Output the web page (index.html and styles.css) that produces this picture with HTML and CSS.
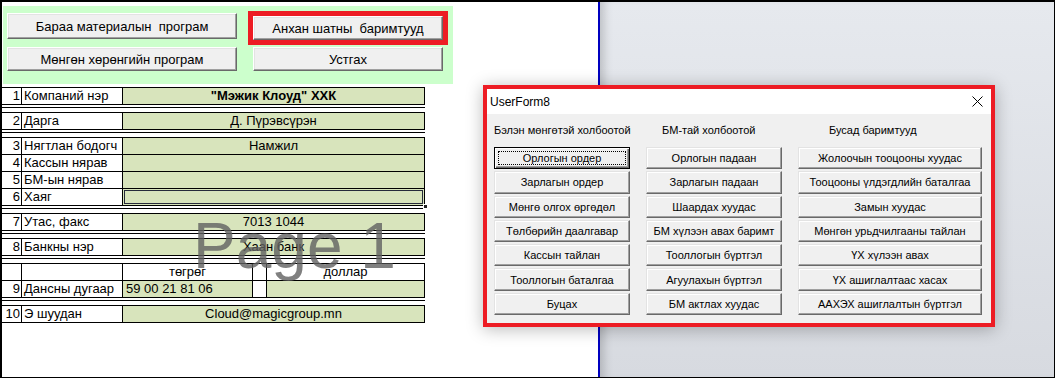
FILE: index.html
```html
<!DOCTYPE html>
<html lang="mn">
<head>
    <meta charset="UTF-8">
    <title>Анхан шатны баримтууд</title>
    <link rel="stylesheet" href="styles.css">
</head>
<body>
<div class="screen">
    <!-- Sheet -->
    <div class="sheet">
        <div class="panel">
            <button class="xbtn tall">Бараа материалын&nbsp; програм</button>
            <button class="xbtn marked">Анхан шатны&nbsp; баримтууд</button>
            <button class="xbtn">Мөнгөн хөрөнгийн програм</button>
            <button class="xbtn">Устгах</button>
        </div>

        <div class="info">
            <div class="grp">
                <div class="row"><span class="num">1</span><span class="label">Компаний нэр</span><span class="val bold">"Мэжик Клоуд" ХХК</span></div>
            </div>
            <div class="gap"></div>
            <div class="grp">
                <div class="row"><span class="num">2</span><span class="label">Дарга</span><span class="val">Д. Пүрэвсүрэн</span></div>
            </div>
            <div class="gap"></div>
            <div class="grp">
                <div class="row"><span class="num">3</span><span class="label">Нягтлан бодогч</span><span class="val">Намжил</span></div>
                <div class="row"><span class="num">4</span><span class="label">Кассын нярав</span><span class="val"></span></div>
                <div class="row"><span class="num">5</span><span class="label">БМ-ын нярав</span><span class="val"></span></div>
                <div class="row"><span class="num">6</span><span class="label">Хаяг</span><span class="val selected"><span class="handle"></span></span></div>
            </div>
            <div class="gap"></div>
            <div class="grp">
                <div class="row"><span class="num">7</span><span class="label">Утас, факс</span><span class="val">7013 1044</span></div>
            </div>
            <div class="gap"></div>
            <div class="grp">
                <div class="row"><span class="num">8</span><span class="label">Банкны нэр</span><span class="val">Хаан банк</span></div>
            </div>
            <div class="gap"></div>
            <div class="grp">
                <div class="row split"><span class="num"></span><span class="label"></span><span class="head">төгрөг</span><span></span><span class="head">доллар</span></div>
                <div class="row split"><span class="num">9</span><span class="label">Дансны дугаар</span><span class="val left">59 00 21 81 06</span><span></span><span class="val"></span></div>
            </div>
            <div class="gap"></div>
            <div class="grp">
                <div class="row"><span class="num">10</span><span class="label">Э шуудан</span><span class="val">Cloud@magicgroup.mn</span></div>
            </div>
        </div>

        <div class="watermark">Page 1</div>
    </div>

    <div class="divider"></div>
    <div class="backdrop"></div>

    <!-- UserForm8 window -->
    <div class="userform">
        <div class="titlebar">
            <span>UserForm8</span>
            <svg class="close" width="11" height="11" viewBox="0 0 11 11">
                <path d="M0.5 0.5 L10.5 10.5 M10.5 0.5 L0.5 10.5" stroke="#000" stroke-width="1"/>
            </svg>
        </div>
        <div class="form-body">
            <div class="form-heads">
                <span>Бэлэн мөнгөтэй холбоотой</span>
                <span class="h2">БМ-тай холбоотой</span>
                <span class="h3">Бусад баримтууд</span>
            </div>
            <div class="form-grid">
                <button class="fbtn focused">Орлогын ордер</button>
                <button class="fbtn">Орлогын падаан</button>
                <button class="fbtn">Жолоочын тооцооны хуудас</button>

                <button class="fbtn">Зарлагын ордер</button>
                <button class="fbtn">Зарлагын падаан</button>
                <button class="fbtn">Тооцооны үлдэгдлийн баталгаа</button>

                <button class="fbtn">Мөнгө олгох өргөдөл</button>
                <button class="fbtn">Шаардах хуудас</button>
                <button class="fbtn">Замын хуудас</button>

                <button class="fbtn">Төлбөрийн даалгавар</button>
                <button class="fbtn">БМ хүлээн авах баримт</button>
                <button class="fbtn">Мөнгөн урьдчилгааны тайлан</button>

                <button class="fbtn">Кассын тайлан</button>
                <button class="fbtn">Тооллогын бүртгэл</button>
                <button class="fbtn">ҮХ хүлээн авах</button>

                <button class="fbtn">Тооллогын баталгаа</button>
                <button class="fbtn">Агуулахын бүртгэл</button>
                <button class="fbtn">ҮХ ашиглалтаас хасах</button>

                <button class="fbtn">Буцах</button>
                <button class="fbtn">БМ актлах хуудас</button>
                <button class="fbtn">ААХЭХ ашиглалтын бүртгэл</button>
            </div>
        </div>
    </div>
</div>
</body>
</html>
```

FILE: styles.css
```css
* {
    box-sizing: border-box;
}

body {
    margin: 0;
    font-family: "Liberation Sans", Arial, sans-serif;
}

.screen {
    position: relative;
    display: flex;
    width: 1055px;
    height: 378px;
    border: 1px solid #000;
    border-top-width: 2px;
    border-left-width: 2px;
    overflow: hidden;
}

/* Sheet side */
.sheet {
    position: relative;
    width: 596px;
    background: #fff;
}

.panel {
    display: grid;
    grid-template-columns: 230px 190px;
    grid-template-rows: 26px 24px;
    column-gap: 16px;
    row-gap: 8px;
    width: 450px;
    height: 78px;
    margin: 4px 0 0 1px;
    padding: 7px 0 0 4px;
    background: #ccffcc;
}

.xbtn {
    font: 13px "Liberation Sans", Arial, sans-serif;
    color: #000;
    background: #f0f0f0;
    border: 1px solid;
    border-color: #fff #696969 #696969 #fff;
    box-shadow: inset -1px -1px #a0a0a0, inset 1px 1px #e3e3e3;
    padding: 0;
    height: 24px;
}

.xbtn.tall {
    height: 26px;
}

.xbtn.marked {
    margin-top: 3px;
    outline: 5px solid #ed1c24;
    outline-offset: 0;
}

/* Cells */
.info {
    width: 423px;
    margin-top: 3px;
    font-size: 13px;
    color: #000;
}

.grp {
    border-bottom: 1px solid #000;
}

.gap {
    margin: 2px 0 4px;
    border-top: 1px solid #000;
}

.row {
    display: grid;
    grid-template-columns: 20px 101px 302px;
    height: 17px;
    border-top: 1px solid #000;
    line-height: 16px;
}

.row.split {
    grid-template-columns: 20px 101px 130px 14px 158px;
}

.row > span {
    border-right: 1px solid #000;
    white-space: nowrap;
    overflow: hidden;
}

.num {
    text-align: right;
    padding-right: 1px;
}

.label {
    padding-left: 2px;
}

.val {
    background: #d8e4bc;
    text-align: center;
}

.val.left {
    text-align: left;
    padding-left: 3px;
}

.head {
    text-align: center;
}

.bold {
    font-weight: bold;
}

.row > .selected {
    position: relative;
    overflow: visible;
    box-shadow: inset 0 0 0 1px #d8e4bc, inset 0 0 0 2px #262a3a;
}

.handle {
    position: absolute;
    right: -4px;
    bottom: -4px;
    width: 5px;
    height: 5px;
    background: #222;
    border: 1px solid #fff;
}

.watermark {
    position: absolute;
    left: 191px;
    top: 212px;
    font-size: 64px;
    line-height: 64px;
    color: rgba(96, 96, 96, 0.8);
    pointer-events: none;
}

.divider {
    width: 2px;
    background: #0000c0;
}

.backdrop {
    flex: 1;
    background: linear-gradient(#e6e9ee, #d7dae0);
    box-shadow: inset 10px 0 10px -6px rgba(0, 0, 0, 0.18);
}

/* UserForm window */
.userform {
    position: absolute;
    left: 481px;
    top: 83px;
    width: 512px;
    height: 242px;
    border: 4px solid #ed1c24;
    background: #f0f0f0;
    box-shadow: 0 2px 16px rgba(0, 0, 0, 0.28);
    display: flex;
    flex-direction: column;
}

.titlebar {
    height: 25px;
    background: #fff;
    display: flex;
    align-items: center;
    justify-content: space-between;
    padding: 0 8px 0 3px;
    font: 12px "Liberation Sans", Arial, sans-serif;
    color: #000;
}

.form-body {
    padding: 9px 0 0 7px;
    font-size: 11px;
    color: #000;
}

.form-heads,
.form-grid {
    display: grid;
    grid-template-columns: 136px 136px 184px;
    column-gap: 16px;
}

.form-heads {
    height: 14px;
    line-height: 14px;
    margin-bottom: 10px;
    white-space: nowrap;
}

.form-heads .h2 { padding-left: 16px; }
.form-heads .h3 { padding-left: 31px; }

.form-grid {
    grid-template-rows: repeat(7, 22.3px);
    row-gap: 2px;
}

.fbtn {
    font: 11px "Liberation Sans", Arial, sans-serif;
    color: #000;
    background: #f0f0f0;
    border: 1px solid;
    border-color: #e3e3e3 #696969 #696969 #e3e3e3;
    box-shadow: inset -1px -1px #a0a0a0, inset 1px 1px #fff;
    padding: 0;
    white-space: nowrap;
}

.fbtn.focused {
    border-color: #000;
    box-shadow: inset 1px 1px #fff, inset -1px -1px #696969, inset -2px -2px #a0a0a0;
    outline: 1px dotted #000;
    outline-offset: -5px;
}
```
